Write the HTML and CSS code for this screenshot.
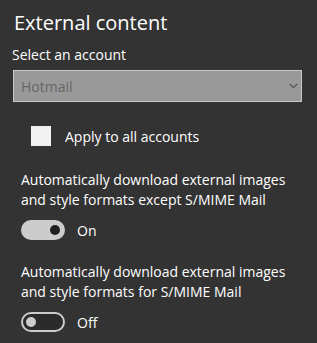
FILE: index.html
```html
<!DOCTYPE html>
<html lang="en">

<head>
    <meta charset="UTF-8">
    <title>External content</title>
    <link rel="stylesheet" href="styles.css">
</head>

<body>
    <div class="panel">
        <h1 class="title">External content</h1>

        <div class="label">Select an account</div>
        <div class="select">
            <span>Hotmail</span>
            <svg class="chevron" width="9" height="6" viewBox="0 0 9 6">
                <path d="M0.8 1 L4.5 4.7 L8.2 1" fill="none" stroke="#555" stroke-width="1.3" />
            </svg>
        </div>

        <div class="check-row">
            <span class="checkbox"></span>
            <span>Apply to all accounts</span>
        </div>

        <div class="setting first">
            <p class="desc">Automatically download external images and style formats except S/MIME Mail</p>
            <div class="toggle-row">
                <span class="toggle on"><span class="knob"></span></span>
                <span>On</span>
            </div>
        </div>

        <div class="setting">
            <p class="desc">Automatically download external images and style formats for S/MIME Mail</p>
            <div class="toggle-row">
                <span class="toggle off"><span class="knob"></span></span>
                <span>Off</span>
            </div>
        </div>
    </div>
</body>

</html>
```

FILE: styles.css
```css
body {
    margin: 0;
    background: #333333;
    color: #ffffff;
    font-family: "Open Sans", "Noto Sans", sans-serif;
    font-size: 14px;
}

.panel {
    width: 317px;
    height: 343px;
    padding: 10px 15px 0 13px;
    box-sizing: border-box;
}

.title {
    margin: 0;
    font-size: 20px;
    font-weight: 400;
    line-height: 26px;
    margin-left: 1px;
}

.label {
    margin-top: 9px;
    font-size: 14px;
    line-height: 20px;
    margin-left: -1px;
}

.select {
    margin-top: 5px;
    height: 30px;
    border: 1px solid #c8c8c8;
    background: #999999;
    color: #666666;
    display: flex;
    align-items: center;
    justify-content: space-between;
    padding: 0 3px 0 7px;
    font-size: 14px;
}

.check-row {
    margin: 24px 0 0 18px;
    display: flex;
    align-items: center;
    gap: 14px;
}

.checkbox {
    width: 20px;
    height: 20px;
    background: #f2f2f2;
}

.setting {
    padding-left: 8px;
}

.desc {
    margin: 22px 0 0;
    line-height: 20px;
}

.setting.first .desc {
    margin-top: 24px;
}

.toggle-row {
    margin-top: 10px;
    display: flex;
    align-items: center;
    gap: 12px;
}

.toggle {
    width: 44px;
    height: 20px;
    border-radius: 10px;
    box-sizing: border-box;
    display: flex;
    align-items: center;
    padding: 0 5px;
}

.toggle .knob {
    width: 10px;
    height: 10px;
    border-radius: 50%;
}

.toggle.on {
    background: #cccccc;
    justify-content: flex-end;
}

.toggle.on .knob {
    background: #1f1f1f;
}

.toggle.off {
    border: 2px solid #cccccc;
    background: #2b2b2b;
    padding: 0 3px;
}

.toggle.off .knob {
    background: #cccccc;
}
```
